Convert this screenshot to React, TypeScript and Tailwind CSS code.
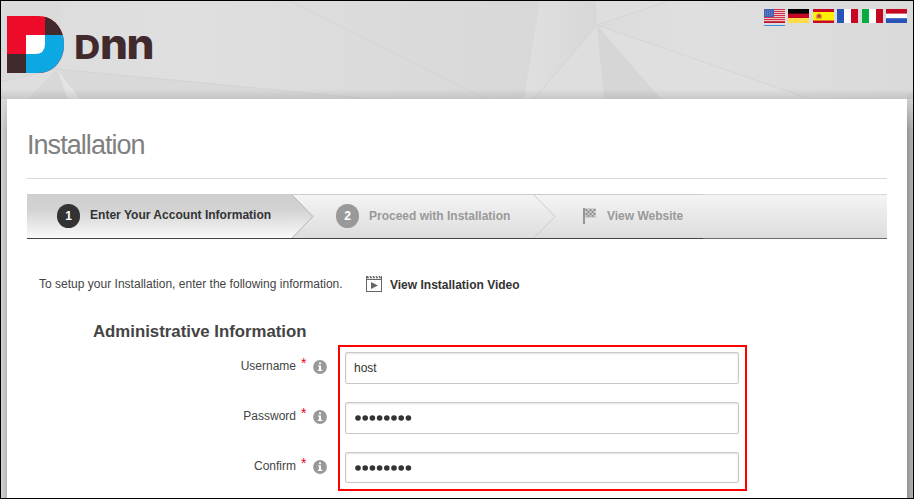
import React from 'react';

const sans = "font-['Liberation_Sans',Arial,sans-serif]";

function Backdrop() {
  return (
    <svg className="absolute inset-0" width="912" height="497" viewBox="1 1 912 497" aria-hidden="true">
      <defs>
        <linearGradient id="base" x1="0" x2="1" y1="0" y2="0">
          <stop offset="0" stopColor="#dcdcdc" />
          <stop offset="0.2" stopColor="#dfdfdf" />
          <stop offset="0.58" stopColor="#d8d8d8" />
          <stop offset="0.75" stopColor="#dfdfdf" />
          <stop offset="1" stopColor="#dadada" />
        </linearGradient>
        <linearGradient id="facet" x1="0" x2="1" y1="0" y2="0">
          <stop offset="0" stopColor="#e0e0e0" />
          <stop offset="1" stopColor="#d7d7d7" />
        </linearGradient>
        <linearGradient id="leftEdge" x1="0" x2="1" y1="0" y2="0">
          <stop offset="0" stopColor="#d3d1d2" />
          <stop offset="1" stopColor="#b8b6b7" />
        </linearGradient>
        <linearGradient id="rightEdge" x1="0" x2="1" y1="0" y2="0">
          <stop offset="0" stopColor="#929695" />
          <stop offset="1" stopColor="#b0b0b0" />
        </linearGradient>
        <linearGradient id="shade" x1="0" x2="0" y1="0" y2="1">
          <stop offset="0" stopColor="#000" stopOpacity="0" />
          <stop offset="1" stopColor="#000" stopOpacity="0.1" />
        </linearGradient>
        <linearGradient id="fadeIn" x1="0" x2="0" y1="92" y2="130" gradientUnits="userSpaceOnUse">
          <stop offset="0" stopColor="#000" />
          <stop offset="1" stopColor="#fff" />
        </linearGradient>
        <mask id="sideMask" maskUnits="userSpaceOnUse" x="0" y="92" width="914" height="407">
          <rect x="0" y="92" width="914" height="407" fill="url(#fadeIn)" />
        </mask>
      </defs>
      <rect x="0" y="0" width="914" height="499" fill="url(#base)" />
      <path d="M0 0H61V60L57 69L0 82Z" fill="#dbdbdb" />
      <path d="M57 69L28 99H0V82Z" fill="#dedede" />
      <path d="M57 69L28 99H68Z" fill="#d8d8d8" />
      <path d="M57 69L68 99H80Z" fill="#e4e4e4" />
      <path d="M57 69L200 82L370 99H80Z" fill="#d9d9d9" />
      <path d="M540 0H596L597 25L534 99H524Z" fill="url(#facet)" />
      <path d="M597 25L534 99H604Z" fill="#dedede" />
      <path d="M597 25L604 99H661Z" fill="#d6d6d6" />
      <path d="M597 25L661 99H810Z" fill="#dfdfdf" />
      <path d="M596 0H675L597 25Z" fill="#dedede" />
      <g fill="none" stroke="#d1d1d1" strokeWidth="0.7">
        <path d="M290 1L486 99M597 25L534 99M597 25L675 -1M597 25L810 99M57 69L370 99M0 82L57 69" />
      </g>
      <rect x="1" y="89" width="912" height="10" fill="url(#shade)" />
      <g mask="url(#sideMask)">
        <rect x="1" y="99" width="6" height="400" fill="url(#leftEdge)" />
        <rect x="907" y="92" width="6" height="407" fill="url(#rightEdge)" />
      </g>
    </svg>
  );
}

function Logo() {
  return (
    <svg width="148" height="57" viewBox="0 0 148 57" role="img" aria-label="DNN">
      <defs>
        <clipPath id="mark">
          <path d="M0 0H31C47 0 57 13 57 28.5S47 57 31 57H0Z" />
        </clipPath>
      </defs>
      <g clipPath="url(#mark)">
        <rect width="57" height="57" fill="#ee0a29" />
        <rect x="38" width="19" height="19" fill="#412a2d" />
        <rect y="38" width="19" height="19" fill="#412a2d" />
        <path d="M38 19H57V57H19V38H38Z" fill="#0ba8e4" />
        <rect x="28" y="28" width="10" height="10" fill="#0ba8e4" />
        <path d="M19 19H38V28Q38 38 28 38H19Z" fill="#fff" />
      </g>
      <g fill="#412a2d" className="font-['Inter',sans-serif] font-extrabold">
        <text x="67.2" y="43" fontSize="33" textLength="26" lengthAdjust="spacingAndGlyphs">D</text>
        <text x="93" y="43" fontSize="42" textLength="28" lengthAdjust="spacingAndGlyphs">n</text>
        <text x="119.5" y="43" fontSize="42" textLength="28" lengthAdjust="spacingAndGlyphs">n</text>
      </g>
    </svg>
  );
}

function Flags() {
  const size = { width: 21, height: 14, viewBox: '0 0 21 14' };
  return (
    <div className="mt-2 mr-[6px] flex h-[17px] items-start gap-[3.4px]">
      <div className="flex h-[17px] shrink-0 flex-col justify-between">
        <svg {...size}>
          <rect width="21" height="14" fill="#f3d3d7" />
          {[0, 2, 4, 6, 8, 10, 12].map((y) => (
            <rect key={y} y={y} width="21" height="1.1" fill="#cf334b" />
          ))}
          <rect y="13" width="21" height="1" fill="#b9172f" />
          <rect width="10" height="8" fill="#4263b4" />
          <path d="M1 2h8M1 4h8M1 6h8" stroke="#7e96cf" strokeWidth="0.8" strokeDasharray="1 1" />
        </svg>
        <div className="h-px w-[21px] bg-[#3c92e2]" />
      </div>
      <svg {...size}>
        <rect width="21" height="5" fill="#000" />
        <rect y="4.6" width="21" height="4.6" fill="#c40824" />
        <rect y="9" width="21" height="5" fill="#ffdc48" />
      </svg>
      <svg {...size}>
        <rect width="21" height="14" fill="#c60a25" />
        <rect y="3" width="21" height="8.5" fill="#ffef00" />
        <rect x="4" y="5" width="4" height="4.5" fill="#dc6a30" />
        <path d="M3.5 6v3.5M8.5 6v3.5M5 4.8h2" stroke="#d99a3a" fill="none" />
        <rect x="5" y="6" width="2" height="2" fill="#b03a3c" />
      </svg>
      <svg {...size}>
        <rect width="21" height="14" fill="#fff" />
        <rect width="7" height="14" fill="#2853b9" />
        <rect x="14" width="7" height="14" fill="#c40824" />
      </svg>
      <svg {...size}>
        <rect width="21" height="14" fill="#fff" />
        <rect width="7" height="14" fill="#06ac3e" />
        <rect x="14" width="7" height="14" fill="#c40824" />
      </svg>
      <svg {...size}>
        <rect width="21" height="14" fill="#fff" />
        <rect width="21" height="4.6" fill="#c40824" />
        <rect y="9.2" width="21" height="4.8" fill="#2853b9" />
      </svg>
    </div>
  );
}

function Chevron({ fill, line }: { fill: string; line: string }) {
  return (
    <svg width="22" height="43" viewBox="0 0 22 43" className="shrink-0">
      <defs>
        <linearGradient id="activeStep" x1="0" x2="0" y1="0" y2="1">
          <stop offset="0" stopColor="#cfcfcf" />
          <stop offset="0.35" stopColor="#d3d3d3" />
          <stop offset="1" stopColor="#fafafa" />
        </linearGradient>
      </defs>
      <path d="M0 0L21 21.5L0 43Z" fill={fill} />
      <path d="M0 0L21 21.5L0 43" fill="none" stroke={line} />
    </svg>
  );
}

function FlagIcon() {
  const cells: React.ReactNode[] = [];
  for (let r = 0; r < 4; r++) {
    for (let c = 0; c < 5; c++) {
      if ((r + c) % 2 === 0) {
        cells.push(<rect key={`${r}-${c}`} x={2.5 + c * 2} y={1 + r * 2} width="2" height="2" fill="#8c8c8c" />);
      }
    }
  }
  return (
    <svg width="14" height="16" viewBox="0 0 14 16" className="-mt-px">
      <rect x="2" y="1" width="11" height="8" fill="#d2d2d2" />
      {cells}
      <path d="M2 1H13M2 9H13" stroke="#aaa" strokeWidth="0.7" />
      <rect width="2" height="16" fill="#969696" />
    </svg>
  );
}

function Steps() {
  return (
    <div className="mt-[15px] flex flex-col">
      <div className="flex h-px">
        <div className="w-[676px] bg-[#cccccc]" />
        <div className="flex-1 bg-[#d9d9d9]" />
      </div>
      <div className="flex h-[43px] items-center bg-linear-to-b from-[#f4f4f4] to-[#dddddd] text-[12px] font-bold">
        <div className="flex h-full w-[265px] items-center bg-linear-to-b from-[#cfcfcf] via-[#d3d3d3] via-35% to-[#fafafa] pl-[30px] text-[#333]">
          <span className="-mt-px flex h-6 w-[23px] items-center justify-center rounded-full bg-[#333] text-white">1</span>
          <span className="-mt-[2px] ml-[10px] text-[12.05px] whitespace-nowrap">Enter Your Account Information</span>
        </div>
        <Chevron fill="url(#activeStep)" line="#b4b4b4" />
        <div className="flex w-[220px] items-center pl-[22px] text-[#999]">
          <span className="-mt-px flex h-6 w-[23px] items-center justify-center rounded-full bg-[#999] text-white">2</span>
          <span className="-mt-[2px] ml-[10px] whitespace-nowrap">Proceed with Installation</span>
        </div>
        <Chevron fill="none" line="#cccccc" />
        <div className="flex items-center pl-[27px] text-[#999]">
          <FlagIcon />
          <span className="-mt-[2px] ml-[10px]">View Website</span>
        </div>
      </div>
      <div className="flex h-px">
        <div className="w-[676px] bg-[#444]" />
        <div className="flex-1 bg-[#6b6b6b]" />
      </div>
    </div>
  );
}

function VideoIcon() {
  return (
    <svg width="16" height="16" viewBox="0 0 16 16">
      <rect x="0.5" y="0.5" width="15" height="15" fill="#fff" stroke="#666" />
      <rect y="3" width="16" height="1" fill="#666" />
      <path d="M1 0.5H15" stroke="#fff" />
      <path d="M1 0l1.5 2.4M4 0l1.5 2.4M7 0l1.5 2.4M10 0l1.5 2.4M13 0l1.5 2.4" stroke="#666" strokeWidth="1.5" />
      <path d="M5 6L12 9.5L5 13Z" fill="#666" />
    </svg>
  );
}

function InfoIcon() {
  return (
    <svg width="14" height="14" viewBox="0 0 14 14">
      <circle cx="7" cy="7" r="6.9" fill="#999" />
      <path d="M6 2.5H8V4.3H6ZM5 5.5H8V9.8H9.3V11H4.8V9.8H6V6.6H5Z" fill="#fff" />
    </svg>
  );
}

function FieldLabel({ text }: { text: string }) {
  return (
    <div className="flex h-[50px] items-start justify-end">
      <span className="mt-[7px] leading-[14px]">{text}</span>
      <span className="mt-[4px] ml-[5px] w-[6px] text-[14px] leading-[14px] text-[#f00020]">*</span>
      <span className="mt-[8px] ml-[6px]">
        <InfoIcon />
      </span>
    </div>
  );
}

const inputBox =
  'block w-[394px] rounded-[2px] border border-[#c8c8c8] bg-white px-2 text-[12px] text-[#333] shadow-[inset_0_1px_2px_#e4e4e4] outline-none';

function Dots() {
  return (
    <svg width="60" height="8" viewBox="0 0 60 8">
      {[0, 1, 2, 3, 4, 5, 6, 7].map((i) => (
        <circle key={i} cx={4 + i * 7.2} cy="4" r="2.8" fill="#333" />
      ))}
    </svg>
  );
}

export default function App() {
  return (
    <div className={`relative h-[499px] w-[914px] overflow-hidden border border-black bg-[#ddd] text-[12px] text-[#444] ${sans}`}>
      <Backdrop />
      <div className="relative flex h-full flex-col">
        <header className="flex h-[98px] shrink-0 items-start justify-between pl-[6px]">
          <div className="pt-[15px]">
            <Logo />
          </div>
          <Flags />
        </header>
        <main className="mr-[6px] ml-[6px] flex-1 bg-white px-5">
          <h1 className="h-[80px] border-b border-[#dadada] pt-[29px] text-[27px] leading-[34px] tracking-[-0.95px] text-[#808080]">
            Installation
          </h1>
          <Steps />
          <div className="mt-[37px] flex h-4 items-center pl-3">
            <span className="mt-px w-[327px] text-[12.04px] whitespace-nowrap">To setup your Installation, enter the following information.</span>
            <VideoIcon />
            <span className="mt-px ml-2 font-bold text-[#333]">View Installation Video</span>
          </div>
          <h2 className="mt-[30px] h-[23px] pl-[66px] text-[16.8px] leading-5 font-bold">Administrative Information</h2>
          <div className="flex">
            <div className="w-[300px] pt-[7px]">
              <FieldLabel text="Username" />
              <FieldLabel text="Password" />
              <FieldLabel text="Confirm" />
            </div>
            <div className="ml-[11px] flex h-[146px] w-[409px] flex-col gap-[18px] border-2 border-[#f00] px-[5px] pt-[5px]">
              <input className={`${inputBox} h-8`} defaultValue="host" />
              <div className={`${inputBox} flex h-8 items-center`}>
                <Dots />
              </div>
              <div className={`${inputBox} flex h-[31px] items-center`}>
                <Dots />
              </div>
            </div>
          </div>
        </main>
      </div>
    </div>
  );
}
